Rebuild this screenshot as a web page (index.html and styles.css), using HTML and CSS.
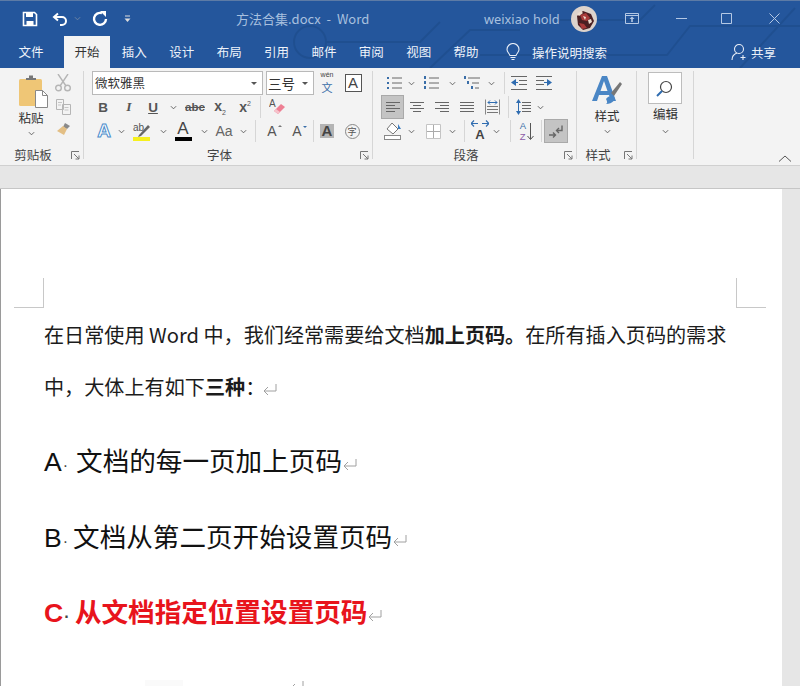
FILE: index.html
```html
<!DOCTYPE html>
<html lang="zh-CN">
<head>
    <meta charset="UTF-8">
    <title>方法合集.docx - Word</title>
    <link rel="stylesheet" href="styles.css">
</head>
<body>
    <svg class="defs" width="0" height="0">
        <symbol id="chev" viewBox="0 0 8 5"><path d="M1 1l3 3 3-3" fill="none" stroke="#555" stroke-width="1"/></symbol>
        <symbol id="launcher" viewBox="0 0 9 9"><path d="M.5 8V.5H8M3 3l5 5M8 4.5V8H4.5" fill="none" stroke="#777" stroke-width="1"/></symbol>
        <symbol id="ret" viewBox="0 0 15 13"><path d="M14 1v7H2M6 4L2 8l4 4" fill="none" stroke="#a0a0a0" stroke-width="1"/></symbol>
    </svg>

    <header class="top">
        <svg class="circuit" width="800" height="68" viewBox="0 0 800 68">
            <path d="M480 55H667L690 26H800M740 68L795 8M560 20H640L655 5M430 68L470 30H520" fill="none" stroke="#1c4a88" stroke-width="2"/>
            <circle cx="310" cy="42" r="16" fill="none" stroke="#1c4a88" stroke-width="2"/>
            <path d="M326 42H420L440 22" fill="none" stroke="#1c4a88" stroke-width="2"/>
        </svg>
        <div class="title-bar">
            <div class="qat">
                <svg width="16" height="16" viewBox="0 0 16 16"><path d="M1.5 1.5h11l2 2v11h-13z" fill="none" stroke="#fff" stroke-width="1.6"/><path d="M4 2h7v4H4z" fill="#fff"/><path d="M4.5 10h7v4h-7z" fill="#fff"/></svg>
                <svg class="undo" width="16" height="14" viewBox="0 0 16 14"><path d="M6 1.5L2 5l4 3.5" fill="none" stroke="#fff" stroke-width="2"/><path d="M2.5 5H10a4 4 0 0 1 0 8H8" fill="none" stroke="#fff" stroke-width="2"/></svg>
                <svg class="qat-chev" width="7" height="5"><use href="#chev"/></svg>
                <svg class="redo" width="16" height="16" viewBox="0 0 16 16"><path d="M10 2.2A6 6 0 1 0 14 8" fill="none" stroke="#fff" stroke-width="2.4"/><path d="M8 0h6v6z" fill="#fff"/></svg>
                <svg class="customize" width="7" height="7" viewBox="0 0 7 7"><path d="M1 1h5" stroke="#ddd"/><path d="M.5 3.5h6L3.5 7z" fill="#ddd"/></svg>
            </div>
            <div class="doc-title">方法合集.docx&nbsp; - &nbsp;Word</div>
            <div class="user-name">weixiao hold</div>
            <svg class="avatar" width="26" height="26" viewBox="0 0 26 26">
                <circle cx="13" cy="13" r="13" fill="#ddd3cc"/>
                <path d="M6 10L12 5l8 3 3 7-4 7-7 2-5-5z" fill="#4a1f22"/>
                <path d="M9 9l6-2 4 5-3 3-5-1zM8 17l5 1 3 4-5 1z" fill="#a83a3a"/>
                <path d="M12 10l3 1-1 3zM6 8l4-3 2 2-4 3zM17 14l3-1 1 3-3 2z" fill="#eeddd0"/>
            </svg>
            <div class="win-controls">
                <svg width="14" height="11" viewBox="0 0 14 11"><path d="M.5.5h13v10H.5zM.5 2.5h13" fill="none" stroke="#b4c8e4"/><path d="M7 3.5L4.5 6h1.7v3h1.6V6h1.7z" fill="#b4c8e4"/></svg>
                <svg class="win-min" width="11" height="11" viewBox="0 0 11 11"><path d="M0 5.5h11" stroke="#b4c8e4"/></svg>
                <svg class="win-max" width="11" height="11" viewBox="0 0 11 11"><path d="M.5.5h10v10H.5z" fill="none" stroke="#b4c8e4"/></svg>
                <svg class="win-close" width="11" height="11" viewBox="0 0 11 11"><path d="M.5.5l10 10M10.5.5l-10 10" stroke="#b4c8e4"/></svg>
            </div>
        </div>
        <nav class="tabs">
            <div class="tab tab-file">文件</div>
            <div class="tab active">开始</div>
            <div class="tab">插入</div>
            <div class="tab">设计</div>
            <div class="tab">布局</div>
            <div class="tab">引用</div>
            <div class="tab">邮件</div>
            <div class="tab">审阅</div>
            <div class="tab">视图</div>
            <div class="tab">帮助</div>
            <svg class="bulb" width="14" height="18" viewBox="0 0 14 18"><path d="M4 12.5C3 10 1 9 1 6.5a6 6 0 0 1 12 0C13 9 11 10 10 12.5zM4.5 14.5h5M5.5 16.5h3" fill="none" stroke="#e8eef7" stroke-width="1.1"/></svg>
            <div class="tell-me">操作说明搜索</div>
            <div class="share">
                <svg width="17" height="18" viewBox="0 0 17 18"><circle cx="8" cy="6" r="4.5" fill="none" stroke="#e8eef7" stroke-width="1.1"/><path d="M1 17c0-4 2-6 5-7M12 12v5M9.5 14.5h5" fill="none" stroke="#e8eef7" stroke-width="1.1"/></svg>
                <span>共享</span>
            </div>
        </nav>
    </header>

    <section class="ribbon">
        <div class="group group-clip">
            <div class="group-body clip-body">
                <div class="big-btn paste">
                    <svg class="paste-icon" width="30" height="34" viewBox="0 0 30 34">
                        <rect x="0" y="4" width="23" height="27" rx="1.5" fill="#efc676"/>
                        <path d="M7 5V3h3V0.5h4V3h3v2z" fill="#777"/>
                        <path d="M16.500 15.500h7l5 5v12h-12z" fill="#fff" stroke="#888"/>
                        <path d="M23.500 15.500v5h5" fill="none" stroke="#888"/>
                    </svg>
                    <span>粘贴</span>
                    <svg class="big-chev" width="7" height="5"><use href="#chev"/></svg>
                </div>
                <div class="clip-tools">
                    <svg width="16" height="18" viewBox="0 0 16 18"><path d="M3 0l8 12M13 0L5 12" stroke="#b5b5b5" stroke-width="1.4" fill="none"/><circle cx="3.500" cy="14" r="2.800" fill="none" stroke="#b5b5b5" stroke-width="1.400"/><circle cx="12.500" cy="14" r="2.800" fill="none" stroke="#b5b5b5" stroke-width="1.400"/></svg>
                    <svg width="15" height="16" viewBox="0 0 15 16"><path d="M.5.500h7v10h-7zM6.500 5.500h8v10h-8z" fill="#f3f3f3" stroke="#b5b5b5"/><path d="M2 3.500h4M2 6h3M8.500 8.500h4M8.500 11h4" stroke="#c5c5c5"/></svg>
                    <svg width="15" height="14" viewBox="0 0 15 14"><path d="M9 1l5 3-3 3-4-2z" fill="#8a8a8a"/><path d="M7 4l4 3-3 6-7-4z" fill="#e3bf85"/></svg>
                </div>
            </div>
            <div class="group-label"><span>剪贴板</span><svg width="9" height="9"><use href="#launcher"/></svg></div>
        </div>

        <div class="group group-font">
            <div class="group-body">
                <div class="tool-row font-r1">
                    <div class="select font-name">微软雅黑<i class="caret"></i></div>
                    <div></div>
                    <div class="select font-size">三号<i class="caret"></i></div>
                    <div class="wen"><small>wén</small><span>文</span></div>
                    <div class="boxed-a">A</div>
                </div>
                <div class="tool-row font-r2">
                    <b class="glyph">B</b>
                    <b class="glyph italic">I</b>
                    <b class="glyph under">U</b>
                    <svg width="7" height="5"><use href="#chev"/></svg>
                    <b class="glyph strike">abc</b>
                    <b class="glyph script">x<sub>2</sub></b>
                    <b class="glyph script">x<sup>2</sup></b>
                    <i class="sep"></i>
                    <svg width="17" height="18" viewBox="0 0 17 18"><text x="0" y="9" class="eraser-a">A</text><path d="M5 13l7-7 4 3-7 7z" fill="#ee7f93"/><path d="M5 13l2-2 4 3-2 2z" fill="#f6c3cc"/></svg>
                </div>
                <div class="tool-row font-r3">
                    <span class="text-effect">A</span>
                    <svg width="7" height="5"><use href="#chev"/></svg>
                    <div class="highlight">
                        <svg width="18" height="19" viewBox="0 0 18 19"><text x="0" y="9" class="ab">ab</text><path d="M6 13L15 3l2 2-9 9-3 1z" fill="#666"/><rect x="0" y="15" width="17" height="4" fill="#f6f01e"/></svg>
                    </div>
                    <svg width="7" height="5"><use href="#chev"/></svg>
                    <div class="font-color"><span>A</span></div>
                    <svg width="7" height="5"><use href="#chev"/></svg>
                    <span class="case">Aa</span>
                    <svg width="7" height="5"><use href="#chev"/></svg>
                    <i class="sep"></i>
                    <span class="grow-a up">A</span>
                    <span class="grow-a down">A</span>
                    <i class="sep"></i>
                    <span class="shade-a">A</span>
                    <span class="enclose">字</span>
                </div>
            </div>
            <div class="group-label"><span>字体</span><svg width="9" height="9"><use href="#launcher"/></svg></div>
        </div>

        <div class="group group-para">
            <div class="group-body">
                <div class="tool-row para-r1">
                    <svg width="16" height="14" viewBox="0 0 16 14"><path d="M1 1h2v2H1zM1 6h2v2H1zM1 11h2v2H1z" fill="#3a6ea8"/><path d="M6 2h10M6 7h10M6 12h10" stroke="#666"/></svg>
                    <svg width="7" height="5"><use href="#chev"/></svg>
                    <svg width="16" height="14" viewBox="0 0 16 14"><path d="M1 0h2v3H1zM1 5h2v3H1zM1 10h2v3H1z" fill="#3a6ea8"/><path d="M6 2h10M6 7h10M6 12h10" stroke="#666"/></svg>
                    <svg width="7" height="5"><use href="#chev"/></svg>
                    <svg width="17" height="14" viewBox="0 0 17 14"><path d="M1 0h2v3H1zM4 5h2v3H4zM8 10h2v3H8z" fill="#3a6ea8"/><path d="M5 2h12M9 7h7M12 12h4" stroke="#666"/></svg>
                    <svg width="7" height="5"><use href="#chev"/></svg>
                    <i class="sep"></i>
                    <svg width="16" height="14" viewBox="0 0 16 14"><path d="M0 .5h16M8 4.500h8M8 8.500h8M0 13.500h16" stroke="#666"/><path d="M0 6.500L5 3v7z" fill="#2f6cb0"/><path d="M4 6h3v1H4z" fill="#2f6cb0"/></svg>
                    <svg width="16" height="14" viewBox="0 0 16 14"><path d="M0 .5h16M0 4.500h8M0 8.500h8M0 13.500h16" stroke="#666"/><path d="M16 6.500L11 3v7z" fill="#2f6cb0"/><path d="M8 6h4v1H8z" fill="#2f6cb0"/></svg>
                </div>
                <div class="tool-row para-r2">
                    <div class="pressed"><svg width="14" height="11" viewBox="0 0 14 11"><path d="M0 .5h14M0 3.500h9M0 6.500h14M0 9.500h9" stroke="#666"/></svg></div>
                    <svg width="14" height="11" viewBox="0 0 14 11"><path d="M0 .5h14M3 3.500h8M0 6.500h14M3 9.500h8" stroke="#666"/></svg>
                    <svg width="14" height="11" viewBox="0 0 14 11"><path d="M0 .5h14M5 3.500h9M0 6.500h14M5 9.500h9" stroke="#666"/></svg>
                    <svg width="14" height="11" viewBox="0 0 14 11"><path d="M0 .5h14M0 3.500h14M0 6.500h14M0 9.500h14" stroke="#666"/></svg>
                    <svg width="15" height="16" viewBox="0 0 15 16"><path d="M.5.500v15M14.500.500v15" stroke="#888"/><path d="M3 3.500h9" stroke="#2f6cb0"/><path d="M5 1.500L3 3.500l2 2M10 1.500l2 2-2 2" fill="none" stroke="#2f6cb0"/><path d="M2 7.500h11M2 10.500h11M2 13.500h11" stroke="#777"/></svg>
                    <i class="sep"></i>
                    <svg width="15" height="16" viewBox="0 0 15 16"><path d="M6 3.500h9M6 6.500h9M6 9.500h9M6 12.500h9" stroke="#666"/><path d="M2.500 0L5 4H0zM2.500 16L5 12H0z" fill="#2f6cb0"/><path d="M2.500 3v10" stroke="#2f6cb0"/></svg>
                    <svg width="7" height="5"><use href="#chev"/></svg>
                </div>
                <div class="tool-row para-r3">
                    <svg width="18" height="18" viewBox="0 0 18 18"><path d="M8 1l6 6-5 5-6-5z" fill="#fff" stroke="#777"/><path d="M14 2l3 5h-3z" fill="#3a7cc0"/><rect x=".5" y="13.500" width="16" height="4" fill="#fff" stroke="#888"/></svg>
                    <svg width="7" height="5"><use href="#chev"/></svg>
                    <svg width="15" height="15" viewBox="0 0 15 15"><path d="M.5.500h14v14H.5z" fill="#fff" stroke="#c4c4c4"/><path d="M7.500 1v13M1 7.500h13" stroke="#aaa"/></svg>
                    <svg width="7" height="5"><use href="#chev"/></svg>
                    <i class="sep"></i>
                    <div class="char-scale">
                        <svg width="18" height="7" viewBox="0 0 18 7"><path d="M0 3.500h7M11 3.500h7M3 .5L0 3.500l3 3M15 .5l3 3-3 3" fill="none" stroke="#2f6cb0" stroke-width="1.200"/></svg>
                        <span>A</span>
                    </div>
                    <svg width="7" height="5"><use href="#chev"/></svg>
                    <i class="sep"></i>
                    <div class="sort">
                        <span><em>A</em><em class="z">Z</em></span>
                        <svg width="7" height="17" viewBox="0 0 7 17"><path d="M3.500 0v16M.5 13l3 3.500 3-3.500" fill="none" stroke="#555"/></svg>
                    </div>
                    <i class="sep"></i>
                    <div class="pressed">
                        <svg width="14" height="13" viewBox="0 0 14 13"><path d="M13 .5v5H8" fill="none" stroke="#666" stroke-width="1.400"/><path d="M10 3L7.500 5.500 10 8" fill="none" stroke="#666" stroke-width="1.400"/><path d="M0 10h6M4 7.500L6.500 10 4 12.500" fill="none" stroke="#666" stroke-width="1.400"/></svg>
                    </div>
                </div>
            </div>
            <div class="group-label"><span>段落</span><svg width="9" height="9"><use href="#launcher"/></svg></div>
        </div>

        <div class="group group-style">
            <div class="group-body">
                <div class="big-btn styles">
                    <svg width="32" height="31" viewBox="0 0 32 31">
                        <path d="M11 0h5l9 25h-5l-2-6H8l-2 6H1zM9.500 15h7L13 5z" fill="#4a86c5"/>
                        <path d="M20 17L29 6l2 2-8 12z" fill="#777"/>
                        <path d="M15 23c2-3 6-4 8-2s-1 7-8 7c2-1 1-3 0-5z" fill="#4a86c5"/>
                    </svg>
                    <span>样式</span>
                    <svg class="big-chev" width="7" height="5"><use href="#chev"/></svg>
                </div>
            </div>
            <div class="group-label"><span>样式</span><svg width="9" height="9"><use href="#launcher"/></svg></div>
        </div>

        <div class="group group-edit">
            <div class="big-btn editing">
                <div class="search-box">
                    <svg width="17" height="17" viewBox="0 0 17 17"><circle cx="10" cy="7" r="5.500" fill="none" stroke="#444" stroke-width="1.200"/><path d="M6 11l-5 5" stroke="#2f6cb0" stroke-width="2"/></svg>
                </div>
                <span>编辑</span>
                <svg class="big-chev" width="7" height="5"><use href="#chev"/></svg>
            </div>
        </div>

        <div class="ribbon-end">
            <svg width="14" height="7" viewBox="0 0 14 7"><path d="M1 6.500l6-5.500 6 5.500" fill="none" stroke="#555"/></svg>
        </div>
    </section>

    <div class="gutter-top"></div>

    <main class="doc-area">
        <article class="page">
            <div class="crop-row">
                <i class="crop crop-l"></i>
                <i class="crop crop-r"></i>
            </div>
            <p class="body-text">在日常使用 Word 中，我们经常需要给文档<b>加上页码。</b>在所有插入页码的需求<br>中，大体上有如下<b>三种</b>：<svg class="ret ret-body" width="15" height="13"><use href="#ret"/></svg></p>
            <p class="option opt-a">A<span class="dot">·</span>文档的每一页加上页码<svg class="ret" width="15" height="13"><use href="#ret"/></svg></p>
            <p class="option opt-b">B<span class="dot">·</span>文档从第二页开始设置页码<svg class="ret" width="15" height="13"><use href="#ret"/></svg></p>
            <p class="option opt-c">C<span class="dot">·</span>从文档指定位置设置页码<svg class="ret" width="15" height="13"><use href="#ret"/></svg></p>
            <div class="next-line"><i class="smear"></i><svg width="15" height="13"><use href="#ret"/></svg></div>
        </article>
    </main>
</body>
</html>
```

FILE: styles.css
```css
* {
    box-sizing: border-box;
}
html, body {
    margin: 0;
    height: 686px;
    overflow: hidden;
}
body {
    background: #e6e6e6;
    font-family: "Noto Sans CJK SC", "Noto Sans", sans-serif;
    color: #333;
}
svg {
    display: block;
}
.defs {
    position: absolute;
}

/* title bar and tabs */
.top {
    position: relative;
    height: 68px;
    background: #24569c;
    border-top: 1px solid #5d7ba6;
}
.circuit {
    position: absolute;
    left: 0;
    top: -1px;
    opacity: .55;
}
.title-bar {
    position: relative;
    display: flex;
    align-items: center;
    height: 35px;
}
.qat {
    display: flex;
    align-items: center;
    width: 236px;
    padding-left: 22px;
}
.undo { margin-left: 14px; }
.qat-chev { margin-left: 6px; opacity: .6; filter: invert(1); }
.redo { margin-left: 11px; }
.customize { margin-left: 16px; }
.doc-title {
    width: 248px;
    font-size: 13px;
    color: #a8c0df;
    white-space: nowrap;
}
.user-name {
    width: 87px;
    font-family: "Noto Sans", sans-serif;
    font-size: 12.800px;
    color: #a8c0df;
    white-space: nowrap;
}
.win-controls {
    display: flex;
    align-items: center;
    padding-left: 28px;
}
.win-min { margin-left: 37px; }
.win-max { margin-left: 34px; }
.win-close { margin-left: 37px; }

.tabs {
    position: relative;
    display: flex;
    align-items: center;
    height: 32px;
    padding-left: 8px;
    gap: 1.400px;
    font-size: 12.500px;
    color: #eef3fa;
}
.tab {
    width: 46px;
    height: 32px;
    line-height: 31px;
    text-align: center;
}
.tab-file {
    margin-right: 8.600px;
}
.tab.active {
    background: #f3f3f3;
    color: #333;
}
.bulb { margin-left: 15px; }
.tell-me { margin-left: 11px; }
.share {
    display: flex;
    align-items: center;
    gap: 3px;
    margin-left: auto;
    padding-right: 24px;
}

/* ribbon */
.ribbon {
    display: flex;
    height: 98px;
    background: #f3f3f3;
    border-bottom: 1px solid #d0d0d0;
    font-size: 12.500px;
}
.group {
    display: flex;
    flex-direction: column;
    height: 97px;
    padding-top: 3px;
}
.group-clip, .group-font, .group-para, .group-style, .group-edit {
    background: linear-gradient(#d6d6d6, #d6d6d6) right 3px / 1px 88px no-repeat;
}
.group-clip { width: 84px; }
.group-font { width: 289px; }
.group-para { width: 204px; }
.group-style { width: 60px; }
.group-edit { width: 57px; }
.group-body {
    height: 72px;
}
.clip-body {
    display: flex;
}
.group-label {
    display: flex;
    align-items: center;
    height: 22px;
    color: #444;
}
.group-label span {
    flex: 1;
    text-align: center;
}
.group-label svg {
    width: 18px;
    padding: 0 4px 0 5px;
    margin-top: 2px;
}
.big-btn {
    display: flex;
    flex-direction: column;
    align-items: center;
    color: #333;
}
.big-chev {
    margin-top: 4px;
}
.paste {
    width: 56px;
    padding: 4px 0 0 6px;
}
.paste-icon {
    margin-left: 5px;
}
.paste span, .styles span {
    line-height: 18px;
}
.clip-tools {
    display: flex;
    flex-direction: column;
    align-items: center;
    gap: 7px;
    width: 14px;
    padding-top: 3px;
}
.styles {
    padding-top: 5px;
}
.editing {
    padding-top: 1px;
}
.search-box {
    display: flex;
    align-items: center;
    justify-content: center;
    width: 34px;
    height: 32px;
    background: #fff;
    border: 1px solid #bdbdbd;
    margin-bottom: 1px;
    margin-right: 2px;
}
.editing span {
    line-height: 18px;
}
.editing .big-chev {
    margin-top: 6px;
}
.ribbon-end {
    flex: 1;
    display: flex;
    justify-content: flex-end;
    align-items: flex-end;
    padding: 0 8px 3px 0;
}

/* tool rows use their own column widths so the icons line up like the real ribbon */
.tool-row {
    display: grid;
    height: 24px;
    place-items: center;
}
.font-r1 { padding-left: 8px; grid-template-columns: 171px 3px 48px 26px 26px; }
.font-r2 { padding-left: 6px; grid-template-columns: 26px 26px 22px 18px 26px 24px 26px 4px 30px; }
.font-r3 { padding-left: 8px; grid-template-columns: 24px 10px 32px 10px 30px 12px 28px 10px 14px 20px 30px 2px 26px 24px; }
.para-r1 { padding-left: 9px; grid-template-columns: 24px 10px 30px 12px 27px 12px 14px 16px 34px; }
.para-r2 { padding-left: 8px; grid-template-columns: 23px 26px 24px 26px 24px 8px 22px 12px; }
.para-r3 { padding-left: 9px; grid-template-columns: 22px 14px 30px 8px 16px 16px 16px 12px 22px 6px 24px; }
.sep {
    display: block;
    width: 1px;
    height: 22px;
    background: #d6d6d6;
}
.select {
    position: relative;
    width: 100%;
    height: 24px;
    padding-left: 2px;
    line-height: 22px;
    background: #fff;
    border: 1px solid #b9b9b9;
    font-size: 12.500px;
}
.font-size {
    padding-left: 1px;
    font-size: 13.500px;
}
.caret {
    position: absolute;
    right: 5px;
    top: 10px;
    border: 3px solid transparent;
    border-top: 3px solid #555;
}
.wen {
    display: flex;
    flex-direction: column;
    align-items: center;
    color: #3a6ea8;
}
.wen span {
    font-size: 11px;
    line-height: 16px;
}
.wen small {
    font-family: "Liberation Sans", sans-serif;
    font-size: 7px;
    line-height: 8px;
    color: #444;
}
.boxed-a {
    width: 17px;
    height: 18px;
    border: 1px solid #555;
    background: #fff;
    text-align: center;
    font-family: "Liberation Sans", sans-serif;
    font-size: 15px;
    line-height: 16px;
    color: #444;
}
.glyph {
    font-family: "Liberation Sans", sans-serif;
    font-size: 13.500px;
    color: #555;
}
.italic { font-style: italic; font-family: "Liberation Serif", serif; }
.under { text-decoration: underline; }
.strike { text-decoration: line-through; font-size: 11.500px; }
.script { font-size: 14px; }
.script sub, .script sup {
    font-size: 7px;
    font-weight: normal;
}
.eraser-a, .ab {
    font-family: "Liberation Sans", sans-serif;
    font-size: 10px;
    fill: #555;
}
.text-effect {
    font-family: "Liberation Sans", sans-serif;
    font-size: 19px;
    font-weight: bold;
    color: #fff;
    -webkit-text-stroke: 1px #4a8ccb;
}
.font-color {
    width: 17px;
    height: 20px;
    text-align: center;
    font-family: "Liberation Sans", sans-serif;
    font-size: 17px;
    line-height: 16px;
    color: #444;
    border-bottom: 4px solid #000;
}
.case {
    font-family: "Liberation Sans", sans-serif;
    font-size: 14px;
    color: #666;
}
.grow-a {
    position: relative;
    font-family: "Liberation Sans", sans-serif;
    font-size: 14px;
    color: #555;
}
.grow-a::after {
    content: "";
    position: absolute;
    right: -5px;
    top: 3px;
    border: 2.500px solid transparent;
}
.grow-a.up::after { border-bottom-color: #777; top: 0; }
.grow-a.down::after { border-top-color: #3a6ea8; }
.shade-a {
    width: 14px;
    height: 14px;
    background: #b4b4b4;
    text-align: center;
    font-family: "Liberation Sans", sans-serif;
    font-size: 15px;
    line-height: 14px;
    font-weight: bold;
    color: #444;
}
.enclose {
    width: 15px;
    height: 15px;
    border: 1px solid #888;
    border-radius: 50%;
    text-align: center;
    font-size: 9px;
    line-height: 13px;
    color: #555;
}
.pressed {
    display: flex;
    align-items: center;
    justify-content: center;
    width: 100%;
    height: 24px;
    background: #c4c4c4;
    border: 1px solid #a9a9a9;
}
.char-scale {
    display: flex;
    flex-direction: column;
    align-items: center;
    font-family: "Liberation Sans", sans-serif;
    font-size: 13px;
    font-weight: bold;
    line-height: 15px;
    color: #444;
}
.sort {
    display: flex;
    align-items: center;
    gap: 1px;
}
.sort span {
    display: flex;
    flex-direction: column;
    font-family: "Liberation Sans", sans-serif;
    font-size: 9.500px;
    line-height: 11px;
}
.sort em {
    font-style: normal;
    color: #3a6ea8;
}
.sort .z {
    color: #8d5ca8;
}

/* document */
.gutter-top {
    height: 23px;
    background: #e6e6e6;
    border-bottom: 1px solid #c6c6c6;
}
.doc-area {
    display: flex;
    height: 498px;
    overflow: hidden;
}
.page {
    width: 782px;
    height: 498px;
    background: #fff;
    border-left: 1px solid #9a9a9a;
    color: #1c1c1c;
}
.crop-row {
    display: flex;
    justify-content: space-between;
    margin-top: 89px;
    padding: 0 16px 0 13px;
}
.crop {
    display: block;
    width: 30px;
    height: 30px;
    border-bottom: 1px solid #c8c8c8;
}
.crop-l { border-right: 1px solid #c8c8c8; }
.crop-r { border-left: 1px solid #c8c8c8; }
.body-text {
    margin: 1px 0 0;
    padding-left: 43px;
    font-size: 20.120px;
    line-height: 52px;
    white-space: nowrap;
}
.ret {
    display: inline-block;
    vertical-align: -1px;
}
.ret-body {
    margin-left: -3px;
}
.option {
    display: flex;
    align-items: baseline;
    height: 75.500px;
    margin: 0;
    padding-left: 43px;
    font-family: "Liberation Sans", "Noto Sans CJK SC", sans-serif;
    font-size: 26.600px;
    line-height: 75.500px;
    color: #111;
    white-space: nowrap;
}
.option .ret {
    margin-bottom: 2px;
}
.body-text + .option {
    margin-top: 12px;
}
.dot {
    padding-left: 1px;
    color: #444;
    font-size: 16px;
}
.opt-a .dot { width: 14.300px; }
.opt-b .dot { width: 11.300px; }
.opt-c .dot { width: 11.700px; }
.opt-c {
    font-weight: bold;
    color: #e8141c;
}
.next-line {
    display: flex;
    align-items: flex-start;
    padding: 28px 0 0 144px;
}
.smear {
    display: block;
    width: 38px;
    height: 6px;
    background: #fafafa;
}
.next-line svg {
    margin-left: 106px;
}
```
